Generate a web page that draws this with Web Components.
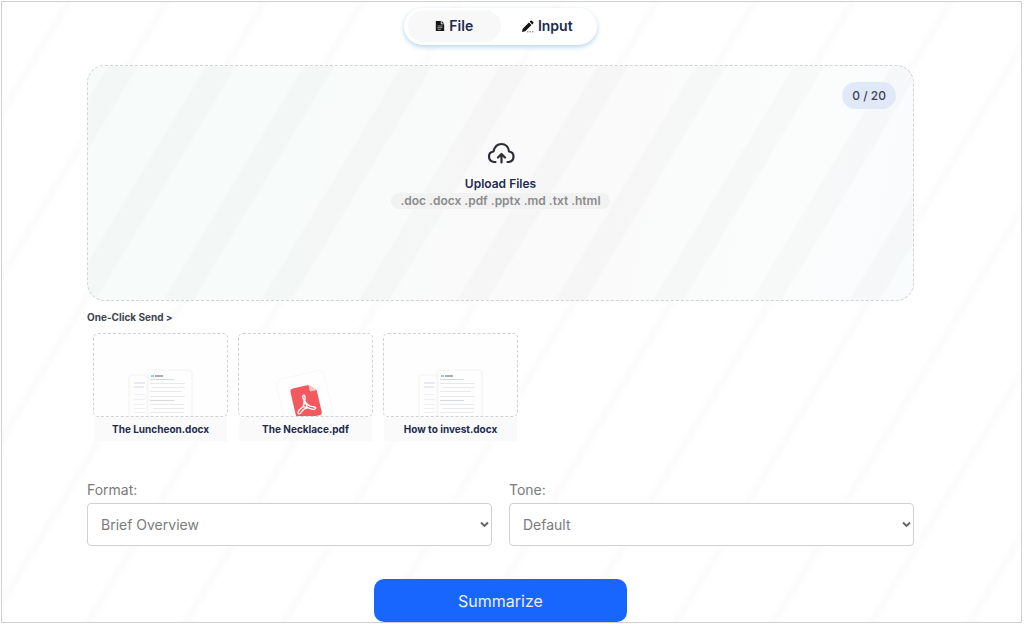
<!DOCTYPE html>
<html lang="en">
<head>
<meta charset="utf-8">
<meta name="viewport" content="width=device-width, initial-scale=1">
<title>Summarizer</title>
<style>
*{box-sizing:border-box}
html{height:100%}
body{margin:0;min-height:100%;display:flex;font-family:Inter,"Open Sans",sans-serif;color:#1d2b4f;background:#fff}
</style>
</head>
<body>
<summary-app></summary-app>
<script>
function define(name, html, setup) {
  const template = document.createElement('template');
  template.innerHTML = html;
  customElements.define(name, class extends HTMLElement {
    connectedCallback() {
      if (this.shadowRoot) return;
      const root = this.attachShadow({mode: 'open'});
      root.append(template.content.cloneNode(true));
      if (setup) setup(this, root);
    }
  });
}

define('mode-tabs', `
<style>
*{box-sizing:border-box}
:host{display:flex;width:193px;height:37px;padding:2px 4px 3px;border-radius:19px;background:#fff;box-shadow:0 2px 5px #b5d5ee}
button{flex:1;display:flex;align-items:center;justify-content:center;gap:4px;border:0;border-radius:16px;background:none;padding:0;font:600 14px/20px Inter,sans-serif;color:#1d2b4f}
button[aria-pressed=true]{background:#f8f8f8}
svg{display:block;width:10px;height:12px}
.pen{width:13px;height:14px}
</style>
<button type="button" aria-pressed="true"><svg viewBox="0 0 12 14" aria-hidden="true"><path fill="#151515" d="M1 1h6v4h4v8H1zM8 1l3 3H8z"/><path stroke="#ddd" stroke-width=".8" d="M3 7h6M3 9h6M3 11h4"/></svg>File</button>
<button type="button" aria-pressed="false"><svg class="pen" viewBox="0 0 13 14" aria-hidden="true"><path fill="#151515" d="M1 13l.7-3.300 6.200-6.200 2.600 2.600-6.200 6.200zM8.600 2.800l1-1q.7-.7 1.400 0l1.200 1.200q.7.7 0 1.400l-1 1z"/><path stroke="#555" stroke-width=".8" stroke-dasharray="1.500 1" d="M6 12.800h6.500"/></svg>Input</button>`);

define('drop-zone', `
<style>
*{box-sizing:border-box}
:host{display:flex;flex-direction:column;min-height:236px;padding:16px 17px;border:1px dashed #d2d4d6;border-radius:18px;
background:repeating-linear-gradient(121deg,#00000000 0 15px,#00000004 19px 41px,#00000000 45px 84px),linear-gradient(100deg,#f7fbfa 0 28%,#fafafa 46% 64%,#fafdfc 82%,#f9fcfc)}
.count{align-self:flex-end;padding:4px 10px;border-radius:14px;background:#e1e9f9;color:#3b4353;font-size:12px;line-height:19px;font-weight:500}
label{align-self:center;display:flex;flex-direction:column;align-items:center;margin-top:32px;font-weight:600;font-size:12px;line-height:18px}
svg{display:block;width:28px;height:24px;margin-bottom:10px}
.types{padding:0 9px;border-radius:8px;background:#f2f2f2;color:#8b8b8b;line-height:16px}
input{position:absolute;width:1px;height:1px;opacity:0}
</style>
<span class="count">0 / 20</span>
<label for="files"><svg viewBox="0 0 28 24" fill="none" stroke="#2b2e34" stroke-width="2.200" stroke-linecap="round" stroke-linejoin="round" aria-hidden="true"><path d="M8.500 21H7C4 20.500 2 18.500 2 15.500c0-3 2-4.700 4.500-5C7.500 6 10.500 3 14.500 3s7 3 7.500 7.500c2.500.3 4.500 2 4.500 5s-2 5-4.500 5.500h-1.500M14.500 21.500V13M11 16.500l3.500-3.500 3.500 3.500"/></svg><span>Upload Files</span><span class="types">.doc .docx .pdf .pptx .md .txt .html</span></label>
<input id="files" type="file" multiple>`);

define('sample-file', `
<style>
*{box-sizing:border-box}
:host{display:block;width:135px}
button{display:block;width:100%;padding:0;border:0;background:none;color:#1d2b4f;font:700 10px/24px Inter,sans-serif}
.preview{display:flex;align-items:flex-end;justify-content:center;height:84px;border:1px dashed #d0d2d6;border-radius:5px;background:#fefefe;overflow:hidden}
.name{display:block;margin:0 1px;background:#fafafb}
svg{display:block;width:70px;height:50px}
:host([kind=doc]) .pdf,:host([kind=pdf]) .doc{display:none}
</style>
<button type="button"><span class="preview">
<svg class="doc" viewBox="0 0 70 50" aria-hidden="true"><path fill="#fefefe" stroke="#f8f8f9" stroke-width="2" d="M3 51V13q0-4 4-4h15v42M21 51V8q0-4 4-4h37q4 0 4 4v43"/><path stroke="#e8e9f3" stroke-width="2" d="M8 17h11M8 21h10"/><path stroke="#efeff2" d="M8 28.500h11M8 33.500h11M8 38.500h11M8 42.500h11M8 46.500h11"/><path stroke="#8ecbed" stroke-width="2" d="M25 10h3"/><path stroke="#8d929e" stroke-width="1.500" d="M29 10h8"/><path stroke="#d5d9dd" d="M24 13.500h24M24 34.500h24"/><path stroke="#e8e9eb" d="M24 17.500h35M26 21.500h33M24 25.500h31M24 30.500h35M24 38.500h34M27 42.500h31M24 46.500h34"/></svg>
<svg class="pdf" viewBox="0 0 70 50" aria-hidden="true"><g transform="rotate(-13 35 40)"><rect x="11" y="8" width="49" height="64" rx="7" fill="#fefefe" stroke="#f8f8f9"/><path fill="#f35a60" d="M26 20h16l7 7v22q0 3-3 3H26q-3 0-3-3V23q0-3 3-3z"/><path fill="#fbc2c4" d="M42 20l7 7h-5q-2 0-2-2z"/><path fill="none" stroke="#fff" stroke-width="1.300" stroke-linejoin="round" d="M35 29c2 0 1 3 0 6 1 4 3 6 6 7s4 2 2 3-5-2-7-3c-3 0-5 1-7 3s-4 1-3-1 4-3 6-4c2-3 3-5 2-8-.5-2 0-3 1-3zM35 35l-3 5 4 2z"/></g></svg>
</span><span class="name"><slot></slot></span></button>`);

define('option-field', `
<style>
*{box-sizing:border-box}
:host{display:block;flex:1;color:#7b7b7b}
label{display:block;font-size:14px;line-height:20px;margin-bottom:3px}
.box{display:grid;align-items:center}
select,svg{grid-area:1/1}
select{appearance:none;width:100%;height:43px;padding:0 24px 0 13px;border:1px solid #d0d0d0;border-radius:4px;background:#fff;color:#7b7b7b;font:14px/20px Inter,sans-serif}
svg{justify-self:end;width:9px;height:7px;margin-right:3px;pointer-events:none}
</style>
<label for="choice"></label><div class="box"><select id="choice"></select><svg viewBox="0 0 9 7" fill="none" stroke="#5f6165" stroke-width="1.800" aria-hidden="true"><path d="M1 1.500l3.500 3.500L8 1.500"/></svg></div>`, (host, root) => {
  root.querySelector('label').textContent = host.getAttribute('label');
  root.querySelector('select').add(new Option(host.getAttribute('value')));
});

define('summary-app', `
<style>
*{box-sizing:border-box}
:host{flex:1;display:flex;flex-direction:column;margin:1px 2px 1px 1px;padding:6px 107px 0 85px;border:1px solid #cfcfcf;
background:repeating-linear-gradient(121deg,#fff 0 51px,#fcfcfc 55px 59px,#fff 63px 84px)}
mode-tabs{align-self:center}
drop-zone{margin-top:20px}
h2{margin:8px 0;font-size:10px;line-height:16px;font-weight:700;color:#3d4350}
.samples{display:flex;flex-wrap:wrap;gap:10px;padding-left:6px}
.options{display:flex;gap:17px;margin-top:39px}
.go{align-self:center;width:253px;height:43px;margin-top:33px;padding:0;border:0;border-radius:10px;background:#1966ff;color:#e9f1ff;font:16px/24px Inter,sans-serif}
</style>
<mode-tabs></mode-tabs>
<drop-zone></drop-zone>
<h2>One-Click Send &gt;</h2>
<div class="samples"><sample-file kind="doc">The Luncheon.docx</sample-file><sample-file kind="pdf">The Necklace.pdf</sample-file><sample-file kind="doc">How to invest.docx</sample-file></div>
<div class="options"><option-field label="Format:" value="Brief Overview"></option-field><option-field label="Tone:" value="Default"></option-field></div>
<button class="go" type="button">Summarize</button>`);
</script>
</body>
</html>
